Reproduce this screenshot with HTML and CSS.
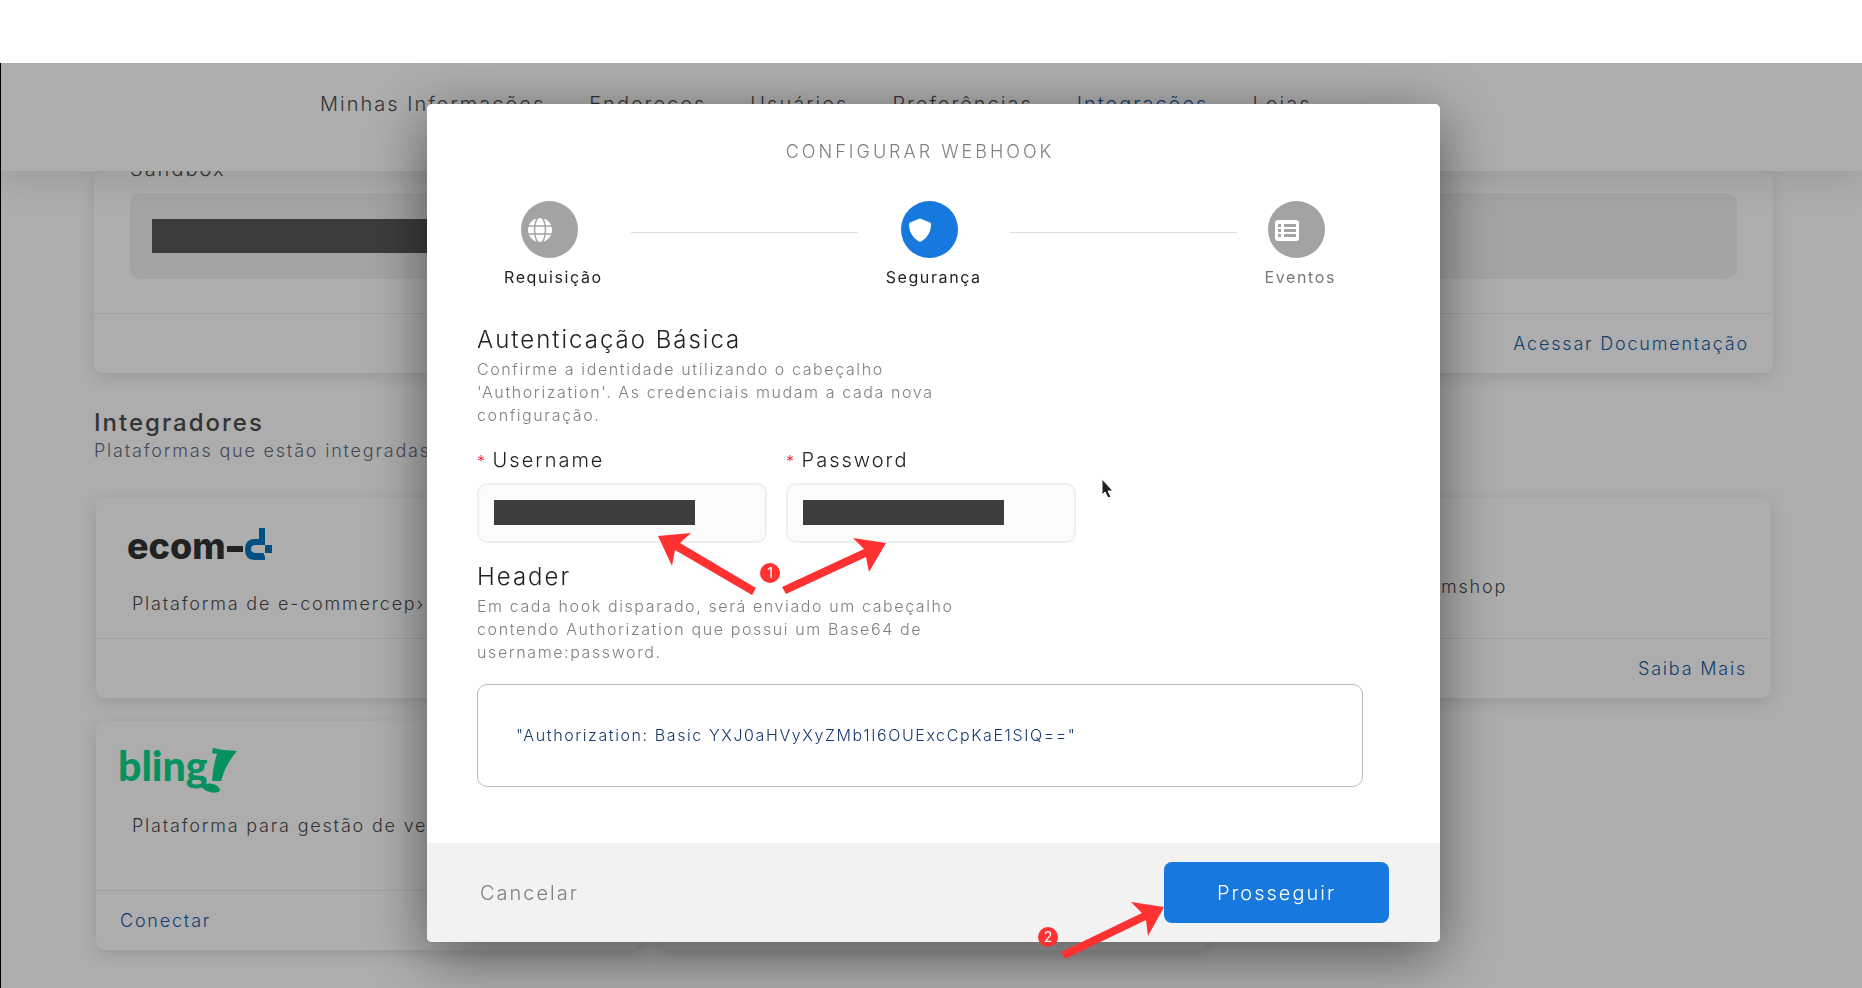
FILE: index.html
```html
<!DOCTYPE html>
<html lang="pt-BR">
<head>
<meta charset="utf-8">
<title>Configurar Webhook</title>
<link rel="stylesheet" href="styles.css">
</head>
<body>
<div class="app">
  <nav class="nav">
    <a href="#">Minhas Informações</a>
    <a href="#">Endereços</a>
    <a href="#">Usuários</a>
    <a href="#">Preferências</a>
    <a href="#" class="active">Integrações</a>
    <a href="#">Lojas</a>
  </nav>
  <main class="content">
    <section class="card keys">
      <div class="keys-body">
        <h3>Sandbox</h3>
        <div class="key-box"><div class="redacted"></div></div>
      </div>
      <div class="card-foot end"><a href="#">Acessar Documentação</a></div>
    </section>
    <h2>Integradores</h2>
    <p class="subtitle">Plataformas que estão integradas</p>
    <div class="grid">
      <article class="card">
        <div class="card-body">
          <svg class="logo ecom" width="146" height="46" viewBox="0 0 146 46" role="img" aria-label="ecom-d">
            <text x="-1" y="31" class="ecom-text">ecom</text>
            <rect x="99" y="18" width="16" height="6" fill="#333"/>
            <path d="M131 0h6v17h-9q-5 0-5 4t5 4h7.500l1.500 4v3h-11q-9 0-9-10.500t9-10.500h5zM137 17h7v8h-7z" fill="#0078be"/>
          </svg>
          <p>Plataforma de e-commercep›</p>
        </div>
        <div class="card-foot"></div>
      </article>
      <article class="card">
        <div class="card-body"></div>
        <div class="card-foot"></div>
      </article>
      <article class="card">
        <div class="card-body right-card"><p>Integrado com Climshop</p></div>
        <div class="card-foot end"><a href="#">Saiba Mais</a></div>
      </article>
      <article class="card tall">
        <div class="card-body">
          <svg class="logo bling" width="120" height="56" viewBox="0 0 120 56" role="img" aria-label="bling">
            <text x="-2" y="33" class="bling-text">bling</text>
            <path d="M93 0q12 3 24 3q-12 14-16 30h-9q1-15 5-27l-5-1zM84 36c8-2 16 1 16 7c-4 3-14 2-18-4z" fill="#0bd68c"/>
          </svg>
          <p>Plataforma para gestão de vendas</p>
        </div>
        <div class="card-foot"><a href="#">Conectar</a></div>
      </article>
      <article class="card tall">
        <div class="card-body"></div>
        <div class="card-foot"></div>
      </article>
    </div>
  </main>
</div>

<div class="scrim">
  <form class="modal" role="dialog" aria-labelledby="title">
    <div class="modal-body">
      <h1 id="title">CONFIGURAR WEBHOOK</h1>
      <ol class="steps">
        <li>
          <span class="dot"><svg width="24" height="24" viewBox="0 0 24 24"><circle cx="12" cy="12" r="12" fill="#fff"/><g fill="none" stroke="#a3a3a3" stroke-width="1.5"><ellipse cx="12" cy="12" rx="5.5" ry="13"/><path d="M0 8h24M0 16h24"/></g></svg></span>
          Requisição
        </li>
        <li class="line"></li>
        <li class="current">
          <span class="dot"><svg width="24" height="24" viewBox="0 0 24 24"><path d="M12 0.500l10 4q1 0.500 1 2C23 15 18 21 12 24C6 21 1 15 1 6.500q0-1.500 1-2z" fill="#fff"/></svg></span>
          Segurança
        </li>
        <li class="line"></li>
        <li class="todo">
          <span class="dot"><svg width="24" height="24" viewBox="0 0 24 24"><rect x="0" y="2" width="24" height="21" rx="3" fill="#fff"/><path d="M3 6h3v3H3zM9 6h12v3H9zM3 11h3v3H3zM9 11h12v3H9zM3 16h3v3H3zM9 16h12v3H9z" fill="#a3a3a3"/></svg></span>
          Eventos
        </li>
      </ol>
      <h2>Autenticação Básica</h2>
      <p class="help">Confirme a identidade utilizando o cabeçalho<br>'Authorization'. As credenciais mudam a cada nova<br>configuração.</p>
      <div class="fields">
        <div class="field">
          <label for="user"><span>*</span>Username</label>
          <div class="control"><input id="user" type="text"><i class="mask"></i></div>
        </div>
        <div class="field">
          <label for="pass"><span>*</span>Password</label>
          <div class="control"><input id="pass" type="password"><i class="mask"></i></div>
        </div>
      </div>
      <h2>Header</h2>
      <p class="help">Em cada hook disparado, será enviado um cabeçalho<br>contendo Authorization que possui um Base64 de<br>username:password.</p>
      <div class="code">"Authorization: Basic YXJ0aHVyXyZMb1I6OUExcCpKaE1SIQ=="</div>
    </div>
    <div class="modal-foot">
      <button type="button" class="cancel">Cancelar</button>
      <button type="button" class="primary">Prosseguir</button>
    </div>
    <svg class="marks" width="1013" height="870" viewBox="0 0 1013 870" aria-hidden="true">
      <g fill="#ff3131">
        <path d="M231 432L264 429L253 439L329 484L325 491L248 446L245 462z"/>
        <path d="M459 439L426 434L437 445L355 483L359 490L439 453L442 468z"/>
        <path d="M737 803L704 798L715 809L634 848L638 855L719 816L721 832z"/>
        <circle cx="343" cy="469" r="10"/><circle cx="621" cy="833" r="10"/>
      </g>
      <text x="343" y="474" class="num">1</text><text x="621" y="838" class="num">2</text>
      <path d="M675 375v16l3-3 3 6 3-1-3-6h5z" fill="#222" stroke="#fff"/>
    </svg>
  </form>
</div>
</body>
</html>
```
FILE: styles.css
```css
* { box-sizing: border-box; letter-spacing: 0.1em; }
body {
  margin: 0;
  padding-top: 63px;
  height: 100vh;
  overflow: hidden;
  background: #fff;
  color: #4d4d4d;
  font-family: Inter, sans-serif;
  font-size: 18px;
  font-weight: 300;
}
h1, h2, h3, p, ol { margin: 0; font-weight: 300; }
a { color: #185da6; text-decoration: none; }
.app {
  height: 100%;
  overflow: hidden;
  border-left: 1px solid #000;
}
.nav {
  position: relative;
  display: flex;
  gap: 44px;
  height: 108px;
  padding: 29px 0 0 319px;
  background: #fff;
  box-shadow: 0 4px 40px rgba(0, 0, 0, 0.14);
  font-size: 20px;
  line-height: 24px;
}
.nav a { color: #4d4d4d; }
.nav a.active { color: #185da6; }
.content { padding: 0 89px 0 93px; }
.card {
  display: flex;
  flex-direction: column;
  min-width: 0;
  border-radius: 9px;
  background: #fff;
  box-shadow: 0 4px 16px rgba(0, 0, 0, 0.12);
}
.keys-body { padding: 0 36px 34px; }
.keys h3 { margin-top: -14px; font-size: 20px; line-height: 24px; }
.key-box {
  margin-top: 12px;
  padding: 26px 22px;
  border-radius: 10px;
  background: #f2f2f2;
}
.redacted { width: 50%; height: 34px; background: #58595b; }
.card-foot {
  display: flex;
  align-items: center;
  height: 60px;
  padding: 0 24px;
  border-top: 1px solid #ececec;
}
.end { justify-content: flex-end; }
.content h2 {
  margin-top: 34px;
  font-size: 24px;
  font-weight: 500;
  line-height: 32px;
  letter-spacing: 2px;
}
.subtitle { color: #6a6c85; line-height: 24px; }
.grid {
  display: grid;
  grid-template-columns: repeat(3, 1fr);
  gap: 23px 21px;
  margin-top: 35px;
  padding: 0 2px;
}
.card-body { height: 140px; padding: 27px 24px 0; }
.tall .card-body { height: 169px; }
.card-body p {
  overflow: hidden;
  padding-left: 12px;
  line-height: 24px;
  white-space: nowrap;
}
.logo { display: block; overflow: visible; }
.ecom { margin: 3px 0 18px 8px; }
.bling { margin-bottom: 10px; }
.ecom-text { fill: #333; font: 800 36px Inter, sans-serif; letter-spacing: 0; }
.bling-text { fill: #0bd68c; font: 900 41px Lato, sans-serif; letter-spacing: 0; }
.right-card { padding-top: 77px; }

.scrim {
  position: fixed;
  inset: 63px 0 0;
  overflow: hidden;
  display: flex;
  justify-content: center;
  align-items: flex-start;
  padding: 41px 0 0 5px;
  background: rgba(0, 0, 0, 0.32);
}
.modal {
  position: relative;
  width: min(1013px, 90%);
  border-radius: 5px;
  background: #fff;
  color: #222;
  box-shadow: 0 14px 60px rgba(0, 0, 0, 0.5);
}
.modal-body { padding: 36px 77px 56px 50px; }
h1 {
  color: #808080;
  font-size: 18px;
  line-height: 24px;
  letter-spacing: 3px;
  text-align: center;
}
.steps {
  display: flex;
  gap: 28px;
  margin-top: 37px;
  padding: 0 27px;
  list-style: none;
  font-size: 16px;
  font-weight: 400;
  line-height: 20px;
}
.line { flex: 1; height: 1px; margin-top: 31px; background: #ddd; }
.todo { color: #777; }
.dot {
  display: flex;
  align-items: center;
  width: 57px;
  height: 57px;
  margin: 0 auto 9px 17px;
  padding-left: 7px;
  border-radius: 50%;
  background: #a3a3a3;
}
.current .dot { margin-left: 15px; background: #1778dd; }
.todo .dot { margin-left: 3px; }
.modal h2 {
  margin-top: 37px;
  font-size: 24px;
  line-height: 32px;
  letter-spacing: 2px;
}
.help { margin-top: 2px; color: #808080; font-size: 16px; line-height: 23px; }
.fields { display: flex; gap: 19px; margin-top: 21px; }
.field { width: 290px; }
.field label { display: block; font-size: 20px; line-height: 24px; }
.field label span { margin-right: 6px; color: #f0142f; font-size: 16px; }
.control { position: relative; margin-top: 10px; }
.control input {
  display: block;
  width: 100%;
  height: 60px;
  padding: 0 16px;
  border: 2px solid #efefef;
  border-radius: 10px;
  background: #fbfbfb;
  font: inherit;
}
.mask {
  position: absolute;
  top: 17px;
  left: 17px;
  width: 201px;
  height: 25px;
  background: #3c3d3e;
}
.modal .fields + h2 { margin-top: 18px; }
.code {
  margin-top: 20px;
  padding: 39px 38px 40px;
  border: 1px solid #bbb;
  border-radius: 10px;
  color: #173a6e;
  font-size: 16px;
  line-height: 22px;
}
.modal-foot {
  display: flex;
  justify-content: space-between;
  align-items: center;
  padding: 19px 51px 19px 53px;
  border-radius: 0 0 5px 5px;
  background: #f2f2f2;
}
button { border: 0; font: inherit; font-size: 20px; }
.cancel { padding: 0; background: none; color: #808080; }
.primary {
  min-width: 225px;
  height: 61px;
  border-radius: 8px;
  background: #1778dd;
  color: #fff;
}
.marks { position: absolute; top: 0; left: 0; pointer-events: none; }
.num { fill: #fff; font: 400 14px Inter, sans-serif; letter-spacing: 0; text-anchor: middle; }
```
